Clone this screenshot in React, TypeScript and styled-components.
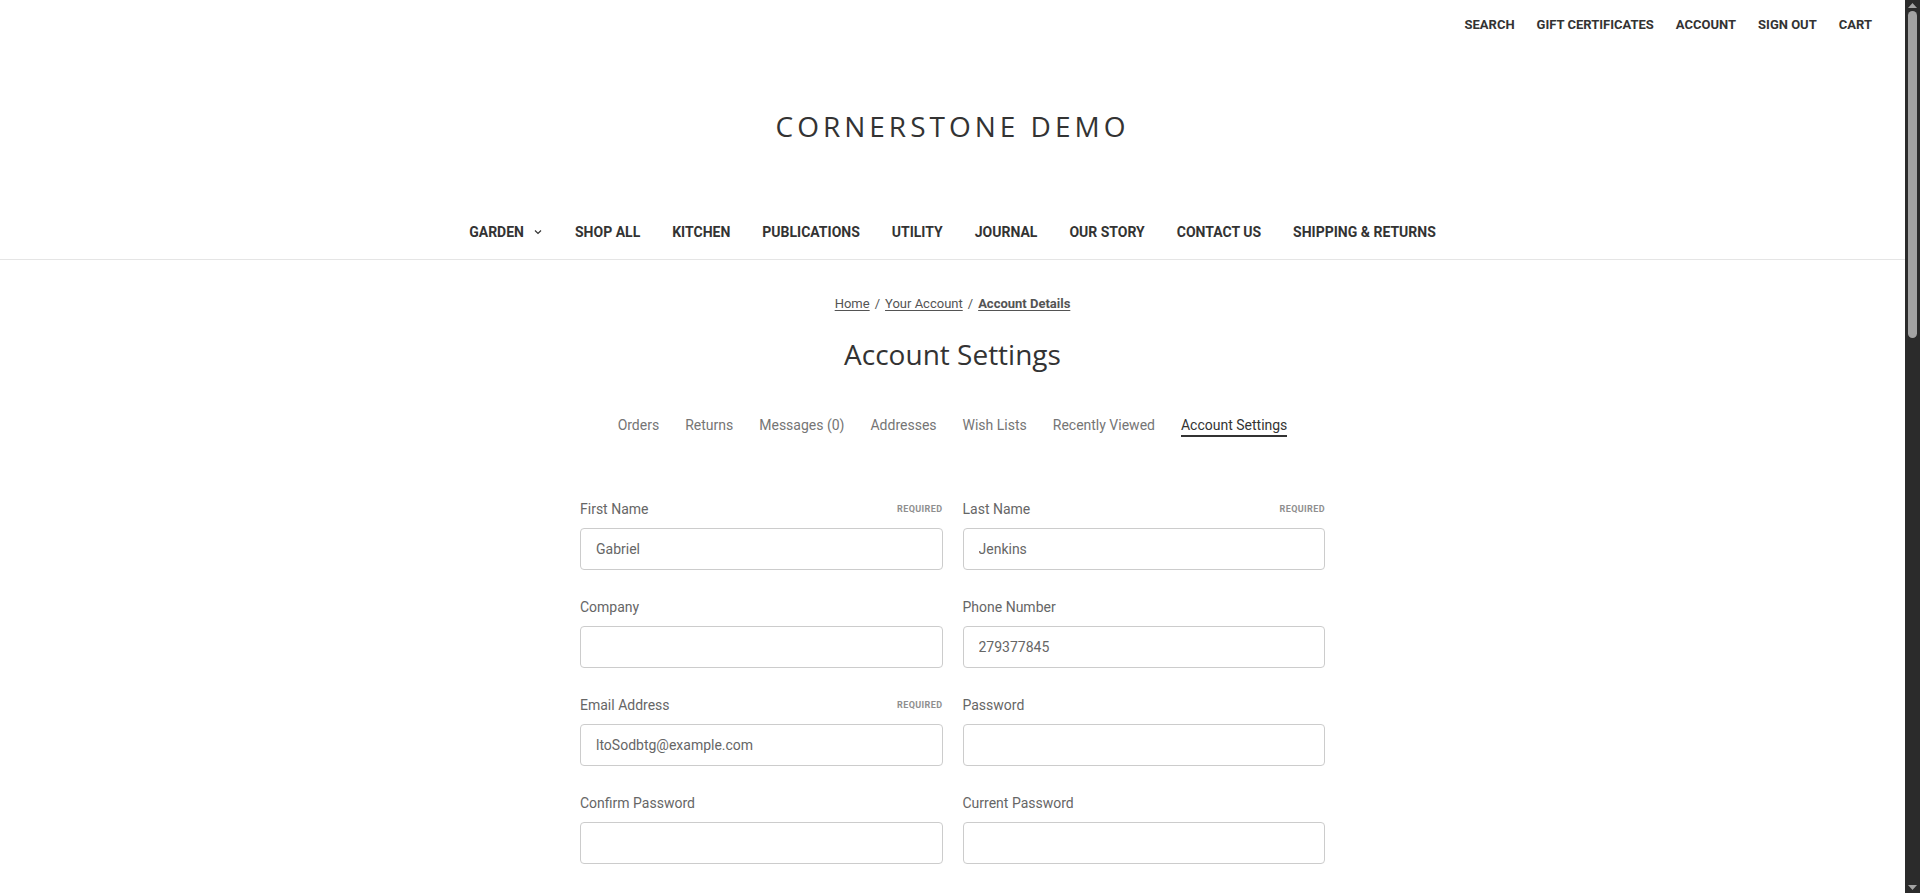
import * as React from "react";
import styled, { createGlobalStyle } from "styled-components";

const GlobalStyle = createGlobalStyle`
  html, body {
    margin: 0;
    height: 100%;
    overflow: hidden;
    background: #ffffff;
  }
  body {
    color: #333333;
    font-family: Roboto, "Liberation Sans", sans-serif;
  }
  * { box-sizing: border-box; }
`;

const Shell = styled.div`
  display: flex;
  height: 100vh;
`;

const Scroller = styled.div`
  flex: 1;
  min-width: 0;
  overflow-y: auto;
  overflow-x: hidden;
  background: #ffffff;
  scrollbar-width: none;
  &::-webkit-scrollbar { display: none; }
`;

/* drawn scrollbar rail, the browser's own one is hidden in the capture */
const Rail = styled.div`
  width: 15px;
  flex: none;
  background: #2b2b2b;
  display: flex;
  flex-direction: column;
  align-items: center;
  padding: 3px 0 3px;
`;

const Thumb = styled.div`
  width: 9px;
  height: 327px;
  margin-top: 3px;
  border-radius: 5px;
  background: #a3a3a3;
`;

const RailSpacer = styled.div`
  flex: 1;
`;

const RailArrow = ({ down }: { down?: boolean }) => (
  <svg width="9" height="5" viewBox="0 0 9 5">
    <path d={down ? "M0 0 H9 L4.5 5 Z" : "M0 5 H9 L4.5 0 Z"} fill="#a3a3a3" />
  </svg>
);

const TopBar = styled.nav`
  display: flex;
  justify-content: flex-end;
  height: 49px;
  padding-right: 22px;
`;

const TopLink = styled.a`
  font-size: 13px;
  font-weight: 700;
  line-height: 49px;
  color: #333333;
  text-transform: uppercase;
  text-decoration: none;
  padding: 0 11px;
`;

const LogoArea = styled.div`
  height: 154px;
  display: flex;
  align-items: center;
  justify-content: center;
`;

const Logo = styled.h1`
  margin: 0;
  font-family: "Open Sans", sans-serif;
  font-weight: 400;
  font-size: 28px;
  letter-spacing: 4px;
  color: #333333;
  line-height: 1;
`;

const MainNav = styled.ul`
  list-style: none;
  margin: 0;
  padding: 1px 0 0;
  height: 57px;
  display: flex;
  justify-content: center;
  align-items: center;
  border-bottom: 1px solid #e5e5e5;
`;

const NavItem = styled.li`
  display: flex;
  align-items: center;
  gap: 9px;
  padding: 0 16px;
  font-size: 14px;
  font-weight: 700;
  text-transform: uppercase;
  color: #333333;
`;

const Main = styled.main`
  display: flex;
  flex-direction: column;
  align-items: center;
  padding-top: 34px;
`;

const Breadcrumbs = styled.ol`
  list-style: none;
  margin: 0;
  padding: 0;
  display: flex;
  gap: 5px;
  font-size: 13px;
  line-height: 20px;
  color: #545454;
`;

const Crumb = styled.li<{ $current?: boolean }>`
  display: flex;
  gap: 5px;
  font-weight: ${(p) => (p.$current ? 700 : 400)};
  a {
    color: #545454;
    text-decoration: underline;
    text-underline-offset: 2px;
  }
`;

const PageHeading = styled.h2`
  margin: 22px 0 0;
  font-family: "Open Sans", sans-serif;
  font-weight: 400;
  font-size: 28px;
  line-height: 36px;
  color: #333333;
`;

const Tabs = styled.ul`
  list-style: none;
  margin: 43px 0 0;
  padding: 0;
  display: flex;
  gap: 26px;
`;

const Tab = styled.li<{ $active?: boolean }>`
  font-size: 14px;
  line-height: 20px;
  color: ${(p) => (p.$active ? "#333333" : "#757575")};
  border-bottom: 2px solid ${(p) => (p.$active ? "#333333" : "transparent")};
`;

const Form = styled.form`
  margin-top: 62px;
  width: 745px;
  display: grid;
  grid-template-columns: 1fr 1fr;
  column-gap: 20px;
  row-gap: 27px;
`;

const Field = styled.div`
  display: flex;
  flex-direction: column;
  gap: 9px;
`;

const LabelRow = styled.div`
  display: flex;
  justify-content: space-between;
  align-items: center;
  height: 20px;
`;

const Label = styled.label`
  font-size: 14px;
  color: #666666;
`;

const Required = styled.small`
  font-size: 9px;
  font-weight: 700;
  letter-spacing: 0.4px;
  color: #8f8f8f;
  text-transform: uppercase;
`;

const Input = styled.input`
  height: 42px;
  width: 100%;
  padding: 0 15px;
  border: 1px solid #cccccc;
  border-radius: 4px;
  background: #ffffff;
  color: #666666;
  font-family: inherit;
  font-size: 14px;
  outline: none;
`;

const Actions = styled.div`
  grid-column: 1 / -1;
  display: flex;
  justify-content: center;
  padding-top: 40px;
`;

const Button = styled.button`
  height: 44px;
  padding: 0 32px;
  border: 1px solid #444444;
  border-radius: 4px;
  background: #444444;
  color: #ffffff;
  font-family: inherit;
  font-size: 14px;
  font-weight: 700;
  text-transform: uppercase;
`;

const Footer = styled.footer`
  margin-top: 120px;
  height: 1260px;
  border-top: 1px solid #e5e5e5;
  background: #ffffff;
`;

const Chevron = () => (
  <svg width="10" height="10" viewBox="0 0 10 10" fill="none" stroke="#333" strokeWidth="1.2">
    <path d="M2 3.5 L5 6.5 L8 3.5" />
  </svg>
);

const fields = [
  { label: "First Name", value: "Gabriel", required: true },
  { label: "Last Name", value: "Jenkins", required: true },
  { label: "Company", value: "" },
  { label: "Phone Number", value: "279377845" },
  { label: "Email Address", value: "ltoSodbtg@example.com", required: true },
  { label: "Password", value: "", type: "password" },
  { label: "Confirm Password", value: "", type: "password" },
  { label: "Current Password", value: "", type: "password" },
];

const navItems = ["Shop All", "Kitchen", "Publications", "Utility", "Journal", "Our Story", "Contact Us", "Shipping & Returns"];
const tabs = ["Orders", "Returns", "Messages (0)", "Addresses", "Wish Lists", "Recently Viewed", "Account Settings"];

export default function App() {
  return (
    <Shell>
      <GlobalStyle />
      <Scroller>
        <TopBar>
          {["Search", "Gift Certificates", "Account", "Sign Out", "Cart"].map((t) => (
            <TopLink key={t} href="#">{t}</TopLink>
          ))}
        </TopBar>
        <LogoArea>
          <Logo>CORNERSTONE DEMO</Logo>
        </LogoArea>
        <MainNav>
          <NavItem>
            Garden <Chevron />
          </NavItem>
          {navItems.map((n) => (
            <NavItem key={n}>{n}</NavItem>
          ))}
        </MainNav>
        <Main>
          <Breadcrumbs>
            <Crumb><a href="#">Home</a>/</Crumb>
            <Crumb><a href="#">Your Account</a>/</Crumb>
            <Crumb $current><a href="#">Account Details</a></Crumb>
          </Breadcrumbs>
          <PageHeading>Account Settings</PageHeading>
          <Tabs>
            {tabs.map((t) => (
              <Tab key={t} $active={t === "Account Settings"}>{t}</Tab>
            ))}
          </Tabs>
          <Form onSubmit={(e) => e.preventDefault()}>
            {fields.map((f) => (
              <Field key={f.label}>
                <LabelRow>
                  <Label>{f.label}</Label>
                  {f.required && <Required>Required</Required>}
                </LabelRow>
                <Input type={f.type ?? "text"} defaultValue={f.value} />
              </Field>
            ))}
            <Actions>
              <Button type="submit">Update Details</Button>
            </Actions>
          </Form>
        </Main>
        <Footer />
      </Scroller>
      <Rail>
        <RailArrow />
        <Thumb />
        <RailSpacer />
        <RailArrow down />
      </Rail>
    </Shell>
  );
}
